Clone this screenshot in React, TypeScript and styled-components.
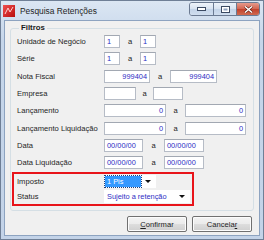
import { createGlobalStyle, styled } from "styled-components";

const GlobalStyle = createGlobalStyle`
  html, body {
    margin: 0;
    padding: 0;
    background: #c9d8ea;
  }
  * {
    box-sizing: border-box;
  }
`;

const ROW = 17.33;

const Window = styled.div`
  width: 264px;
  height: 240px;
  display: flex;
  flex-direction: column;
  background: linear-gradient(#dbe6f3, #c6d6ea 40px, #c3d3e8);
  border: 1px solid #6f7f96;
  font-family: "Liberation Sans", Arial, sans-serif;
`;

const TitleBar = styled.div`
  height: 19px;
  display: flex;
  align-items: center;
  padding: 0 3px 0 2px;
  flex-shrink: 0;
`;

const Title = styled.span`
  margin-left: 5px;
  font-size: 8.4px;
  color: #1e1e1e;
  flex: 1;
`;

const Caption = styled.div`
  display: flex;
  align-self: flex-start;
  margin-top: 1px;
  border: 1px solid #6b7a92;
  border-radius: 3px;
  overflow: hidden;
  height: 14px;
`;

const CaptionButton = styled.div<{ $close?: boolean }>`
  width: ${(p) => (p.$close ? 23 : 23)}px;
  display: flex;
  align-items: center;
  justify-content: center;
  background: ${(p) =>
    p.$close
      ? "linear-gradient(#e59a8c, #d4634f 50%, #c2412c 51%, #cf6a50)"
      : "linear-gradient(#eef3fa, #d7e2f0 50%, #c3d3e8 51%, #d0deef)"};
  & + & {
    border-left: 1px solid #6b7a92;
  }
`;

const Client = styled.div`
  flex: 1;
  margin: 0 3px 3px 3px;
  background: #f0f0f0;
  border: 1px solid #8da3c0;
  display: flex;
  flex-direction: column;
  padding-top: 2px;
`;

const GroupBox = styled.fieldset`
  margin: 0 5px;
  padding: 0 0 4px 6px;
  border: 1px solid #d5dfe5;
  border-radius: 3px;
  min-inline-size: 0;
`;

const Legend = styled.legend`
  font-weight: bold;
  font-size: 7.8px;
  color: #1a1a1a;
  padding: 0 2px;
  margin-left: 2px;
  line-height: 10px;
`;

const Row = styled.div<{ $h?: number }>`
  height: ${(p) => p.$h ?? ROW}px;
  display: flex;
  align-items: center;
`;

const Label = styled.span<{ $pad?: number }>`
  width: ${(p) => 87 + (p.$pad ?? 0)}px;
  padding-left: ${(p) => p.$pad ?? 0}px;
  font-size: 7.6px;
  color: #1e1e1e;
  flex-shrink: 0;
`;

const Input = styled.div<{ $w: number; $right?: boolean }>`
  width: ${(p) => p.$w}px;
  height: 13px;
  background: #fff;
  border: 1px solid #b6bcc6;
  border-top-color: #a2a8b2;
  font-size: 7.4px;
  color: #2d2dc4;
  line-height: 11px;
  padding: 0 2px;
  text-align: ${(p) => (p.$right ? "right" : "left")};
  flex-shrink: 0;
`;

const Sep = styled.span<{ $w: number }>`
  width: ${(p) => p.$w}px;
  text-align: center;
  font-size: 7.6px;
  color: #1e1e1e;
  flex-shrink: 0;
`;

const Highlight = styled.div`
  width: 264px;
  margin-left: -5px;
  width: 182px;
  height: ${ROW * 2}px;
  border: 2px solid #e8141a;
  display: flex;
  flex-direction: column;
`;

const Combo = styled.div<{ $w: number }>`
  width: ${(p) => p.$w}px;
  height: 13px;
  background: #fff;
  display: flex;
  align-items: center;
  padding: 0 1px;
  font-size: 7.4px;
  color: #2d2dc4;
`;

const ComboValue = styled.span<{ $selected?: boolean }>`
  flex: 1;
  height: 11px;
  line-height: 11px;
  padding-left: 2px;
  background: ${(p) => (p.$selected ? "#3399ff" : "transparent")};
  color: ${(p) => (p.$selected ? "#fff" : "#2d2dc4")};
  outline: ${(p) => (p.$selected ? "1px dotted #1b3c78" : "none")};
`;

const Arrow = styled.span`
  width: 14px;
  display: flex;
  justify-content: center;
  &::after {
    content: "";
    border-left: 3px solid transparent;
    border-right: 3px solid transparent;
    border-top: 3px solid #111;
  }
`;

const ButtonBar = styled.div`
  display: flex;
  justify-content: flex-end;
  gap: 5px;
  padding: 5px 7px 0 0;
`;

const Button = styled.button`
  width: 60px;
  height: 16px;
  padding: 0;
  border: 1px solid #707070;
  border-radius: 2px;
  background: linear-gradient(#f3f3f3, #ebebeb 50%, #dddddd 51%, #cfcfcf);
  font-family: "Liberation Sans", Arial, sans-serif;
  font-size: 7.6px;
  color: #1e1e1e;
  box-shadow: inset 0 0 0 1px #fcfcfc;
  u {
    text-decoration-thickness: 1px;
  }
`;

function AppIcon() {
  return (
    <svg width="12" height="12" viewBox="0 0 12 12">
      <defs>
        <linearGradient id="ic" x1="0" y1="0" x2="1" y2="1">
          <stop offset="0" stopColor="#f05050" />
          <stop offset="1" stopColor="#b80c0c" />
        </linearGradient>
      </defs>
      <rect x="0" y="0" width="12" height="12" fill="url(#ic)" />
      <path d="M2 9 L5 3 L7 7 L10 2" stroke="#ffd0d0" strokeWidth="1" fill="none" />
    </svg>
  );
}

function App() {
  return (
    <>
      <GlobalStyle />
      <Window>
        <TitleBar>
          <AppIcon />
          <Title>Pesquisa Retenções</Title>
          <Caption>
            <CaptionButton>
              <svg width="9" height="4" viewBox="0 0 9 4">
                <rect x="0.5" y="0.5" width="8" height="3" fill="#fff" stroke="#3b4a63" />
              </svg>
            </CaptionButton>
            <CaptionButton>
              <svg width="9" height="7" viewBox="0 0 9 7">
                <rect x="0.5" y="0.5" width="8" height="6" fill="#fff" stroke="#3b4a63" />
                <rect x="2.5" y="2.5" width="4" height="2" fill="#8fa2bf" />
              </svg>
            </CaptionButton>
            <CaptionButton $close>
              <svg width="9" height="7" viewBox="0 0 9 7">
                <path d="M1 0.5 L8 6.5 M8 0.5 L1 6.5" stroke="#5a1a10" strokeWidth="2.6" />
                <path d="M1 0.5 L8 6.5 M8 0.5 L1 6.5" stroke="#fff" strokeWidth="1.5" />
              </svg>
            </CaptionButton>
          </Caption>
        </TitleBar>
        <Client>
          <GroupBox>
            <Legend>Filtros</Legend>
            <Row>
              <Label>Unidade de Negócio</Label>
              <Input $w={16}>1</Input>
              <Sep $w={20}>a</Sep>
              <Input $w={16}>1</Input>
            </Row>
            <Row>
              <Label>Série</Label>
              <Input $w={16}>1</Input>
              <Sep $w={20}>a</Sep>
              <Input $w={16}>1</Input>
            </Row>
            <Row>
              <Label>Nota Fiscal</Label>
              <Input $w={46} $right>
                999404
              </Input>
              <Sep $w={20}>a</Sep>
              <Input $w={47} $right>
                999404
              </Input>
            </Row>
            <Row>
              <Label>Empresa</Label>
              <Input $w={32} />
              <Sep $w={17}>a</Sep>
              <Input $w={30} />
            </Row>
            <Row>
              <Label>Lançamento</Label>
              <Input $w={62} $right>
                0
              </Input>
              <Sep $w={19}>a</Sep>
              <Input $w={61} $right>
                0
              </Input>
            </Row>
            <Row>
              <Label>Lançamento Liquidação</Label>
              <Input $w={62} $right>
                0
              </Input>
              <Sep $w={19}>a</Sep>
              <Input $w={61} $right>
                0
              </Input>
            </Row>
            <Row>
              <Label>Data</Label>
              <Input $w={39}>00/00/00</Input>
              <Sep $w={21}>a</Sep>
              <Input $w={40}>00/00/00</Input>
            </Row>
            <Row>
              <Label>Data Liquidação</Label>
              <Input $w={39}>00/00/00</Input>
              <Sep $w={21}>a</Sep>
              <Input $w={40}>00/00/00</Input>
            </Row>
            <Highlight>
              <Row $h={ROW - 2}>
                <Label $pad={3}>Imposto</Label>
                <Combo $w={52}>
                  <ComboValue $selected>1 Pis</ComboValue>
                  <Arrow />
                </Combo>
              </Row>
              <Row $h={ROW - 2}>
                <Label $pad={3}>Status</Label>
                <Combo $w={86}>
                  <ComboValue>Sujeito a retenção</ComboValue>
                  <Arrow />
                </Combo>
              </Row>
            </Highlight>
          </GroupBox>
          <ButtonBar>
            <Button>
              <u>C</u>onfirmar
            </Button>
            <Button>
              Cancela<u>r</u>
            </Button>
          </ButtonBar>
        </Client>
      </Window>
    </>
  );
}

export default App;
